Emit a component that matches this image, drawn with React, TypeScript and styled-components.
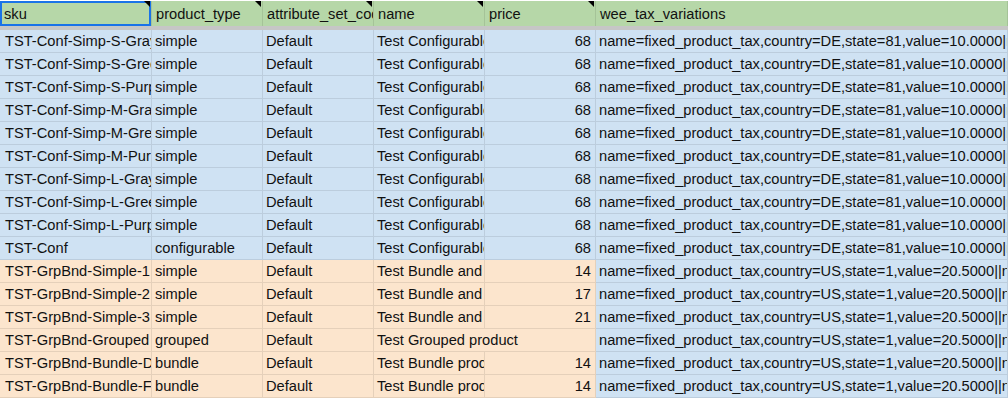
import styled, { createGlobalStyle } from "styled-components";

const GlobalStyle = createGlobalStyle`
  html, body {
    margin: 0;
    padding: 0;
    background: #ffffff;
    overflow: hidden;
  }
  * {
    box-sizing: border-box;
  }
`;

const COLUMNS = "152px 111px 111px 111px 111px 1fr";

const colors = {
  header: "#b6d7a8",
  blue: "#cfe2f3",
  orange: "#fce5cd",
  grid: "rgba(0, 0, 0, 0.09)",
  frozen: "#c6c6c6",
  select: "#1a73e8",
  text: "#111111",
};

const Sheet = styled.div`
  width: 1008px;
  height: 399px;
  padding-top: 1px;
  font-family: "Liberation Sans", Arial, sans-serif;
  font-size: 14.67px;
  color: ${colors.text};
  overflow: hidden;
`;

const HeaderRow = styled.div`
  display: grid;
  grid-template-columns: ${COLUMNS};
  height: 29px;
  background: ${colors.header};
  border-bottom: 4px solid ${colors.frozen};
`;

const HeaderCell = styled.div<{ $selected?: boolean; $flag?: boolean }>`
  position: relative;
  display: flex;
  align-items: center;
  padding: 0 3px 0 4px;
  white-space: nowrap;
  overflow: hidden;
  border-right: 1px solid ${colors.grid};
  box-shadow: ${({ $selected }) =>
    $selected ? `inset 0 0 0 2px ${colors.select}` : "none"};

  &::after {
    content: "";
    display: ${({ $flag }) => ($flag ? "block" : "none")};
    position: absolute;
    top: 0;
    right: 1px;
    border-style: solid;
    border-width: 0 6px 6px 0;
    border-color: transparent #000000 transparent transparent;
  }
`;

const Row = styled.div`
  display: grid;
  grid-template-columns: ${COLUMNS};
  height: 23px;
`;

const Cell = styled.div<{
  $bg: string;
  $right?: boolean;
  $span?: number;
  $first?: boolean;
}>`
  display: flex;
  align-items: center;
  justify-content: ${({ $right }) => ($right ? "flex-end" : "flex-start")};
  padding: ${({ $right, $first }) =>
    $right ? "0 4px 0 3px" : $first ? "0 2px 0 5px" : "0 2px 0 3px"};
  grid-column: ${({ $span }) => ($span ? `span ${$span}` : "auto")};
  background: ${({ $bg }) => $bg};
  white-space: nowrap;
  overflow: hidden;
  border-right: 1px solid ${colors.grid};
  border-bottom: 1px solid ${colors.grid};
`;

type Product = {
  sku: string;
  type: string;
  name: string;
  price: string;
  tax: string;
  group: "conf" | "grp";
};

const DE_TAX =
  "name=fixed_product_tax,country=DE,state=81,value=10.0000|name=fixed_product_tax,country=FR,state=0,value=5.0000";
const US_TAX =
  "name=fixed_product_tax,country=US,state=1,value=20.5000||name=fixed_product_tax,country=US,state=12,value=1.0000";

const CONF_NAME = "Test Configurable Product";

const products: Product[] = [
  { sku: "TST-Conf-Simp-S-Gray", type: "simple", name: CONF_NAME, price: "68", tax: DE_TAX, group: "conf" },
  { sku: "TST-Conf-Simp-S-Green", type: "simple", name: CONF_NAME, price: "68", tax: DE_TAX, group: "conf" },
  { sku: "TST-Conf-Simp-S-Purple", type: "simple", name: CONF_NAME, price: "68", tax: DE_TAX, group: "conf" },
  { sku: "TST-Conf-Simp-M-Gray", type: "simple", name: CONF_NAME, price: "68", tax: DE_TAX, group: "conf" },
  { sku: "TST-Conf-Simp-M-Green", type: "simple", name: CONF_NAME, price: "68", tax: DE_TAX, group: "conf" },
  { sku: "TST-Conf-Simp-M-Purple", type: "simple", name: CONF_NAME, price: "68", tax: DE_TAX, group: "conf" },
  { sku: "TST-Conf-Simp-L-Gray", type: "simple", name: CONF_NAME, price: "68", tax: DE_TAX, group: "conf" },
  { sku: "TST-Conf-Simp-L-Green", type: "simple", name: CONF_NAME, price: "68", tax: DE_TAX, group: "conf" },
  { sku: "TST-Conf-Simp-L-Purple", type: "simple", name: CONF_NAME, price: "68", tax: DE_TAX, group: "conf" },
  { sku: "TST-Conf", type: "configurable", name: CONF_NAME, price: "68", tax: DE_TAX, group: "conf" },
  { sku: "TST-GrpBnd-Simple-1", type: "simple", name: "Test Bundle and Grouped Simple 1", price: "14", tax: US_TAX, group: "grp" },
  { sku: "TST-GrpBnd-Simple-2", type: "simple", name: "Test Bundle and Grouped Simple 2", price: "17", tax: US_TAX, group: "grp" },
  { sku: "TST-GrpBnd-Simple-3", type: "simple", name: "Test Bundle and Grouped Simple 3", price: "21", tax: US_TAX, group: "grp" },
  { sku: "TST-GrpBnd-Grouped", type: "grouped", name: "Test Grouped product", price: "", tax: US_TAX, group: "grp" },
  { sku: "TST-GrpBnd-Bundle-Dynamic", type: "bundle", name: "Test Bundle product Dynamic", price: "14", tax: US_TAX, group: "grp" },
  { sku: "TST-GrpBnd-Bundle-Fixed", type: "bundle", name: "Test Bundle product Fixed", price: "14", tax: US_TAX, group: "grp" },
];

const headers = [
  { label: "sku", flag: true, selected: true },
  { label: "product_type", flag: true },
  { label: "attribute_set_code", flag: true },
  { label: "name", flag: true },
  { label: "price", flag: true },
  { label: "wee_tax_variations", flag: false },
];

const App = () => {
  return (
    <>
      <GlobalStyle />
      <Sheet>
        <HeaderRow>
          {headers.map((h) => (
            <HeaderCell key={h.label} $flag={h.flag} $selected={h.selected}>
              {h.label}
            </HeaderCell>
          ))}
        </HeaderRow>
        {products.map((p) => {
          const bg = p.group === "conf" ? colors.blue : colors.orange;
          return (
            <Row key={p.sku}>
              <Cell $bg={bg} $first>
                {p.sku}
              </Cell>
              <Cell $bg={bg}>{p.type}</Cell>
              <Cell $bg={bg}>Default</Cell>
              {p.price ? (
                <>
                  <Cell $bg={bg}>{p.name}</Cell>
                  <Cell $bg={bg} $right>
                    {p.price}
                  </Cell>
                </>
              ) : (
                <Cell $bg={bg} $span={2}>
                  {p.name}
                </Cell>
              )}
              <Cell $bg={colors.blue}>{p.tax}</Cell>
            </Row>
          );
        })}
      </Sheet>
    </>
  );
};

export default App;
